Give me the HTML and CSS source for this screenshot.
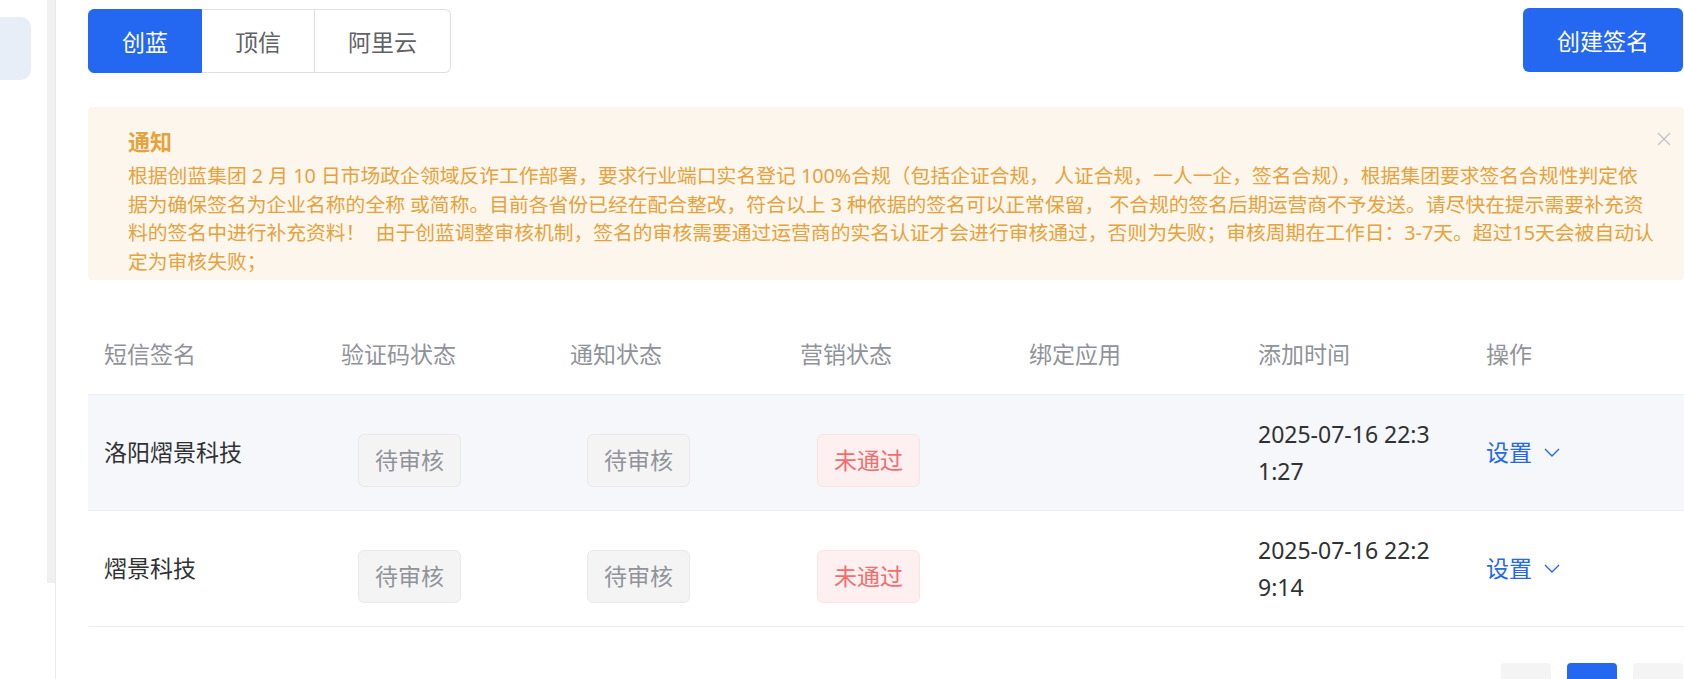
FILE: index.html
```html
<!DOCTYPE html>
<html lang="zh-CN">
<head>
    <meta charset="UTF-8">
    <meta name="viewport" content="width=device-width, initial-scale=1.0">
    <title>短信签名</title>
    <link rel="stylesheet" href="styles.css">
</head>
<body>
    <aside class="sidebar">
        <nav class="menu">
            <div class="menu-item active"></div>
        </nav>
        <div class="scroll-track"></div>
    </aside>
    <main class="main">
        <div class="topbar">
            <div class="tabs">
                <button class="tab active">创蓝</button>
                <button class="tab">顶信</button>
                <button class="tab">阿里云</button>
            </div>
            <button class="btn-primary">创建签名</button>
        </div>

        <div class="notice">
            <div class="notice-title">通知</div>
            <p class="notice-desc">根据创蓝集团 2 月 10 日市场政企领域反诈工作部署，要求行业端口实名登记 100%合规（包括企证合规， 人证合规，一人一企，签名合规），根据集团要求签名合规性判定依据为确保签名为企业名称的全称 或简称。目前各省份已经在配合整改，符合以上 3 种依据的签名可以正常保留， 不合规的签名后期运营商不予发送。请尽快在提示需要补充资料的签名中进行补充资料！&nbsp; 由于创蓝调整审核机制，签名的审核需要通过运营商的实名认证才会进行审核通过，否则为失败；审核周期在工作日：3-7天。超过15天会被自动认定为审核失败；</p>
            <span class="notice-close">
                <svg width="14" height="14" viewBox="0 0 14 14"><path d="M1 1 L13 13 M13 1 L1 13" stroke="#c0c4cc" stroke-width="1.4" fill="none"/></svg>
            </span>
        </div>

        <div class="table">
            <div class="row head">
                <div class="cell">短信签名</div>
                <div class="cell">验证码状态</div>
                <div class="cell">通知状态</div>
                <div class="cell">营销状态</div>
                <div class="cell">绑定应用</div>
                <div class="cell">添加时间</div>
                <div class="cell">操作</div>
            </div>
            <div class="row hover">
                <div class="cell">洛阳熠景科技</div>
                <div class="cell"><span class="tag">待审核</span></div>
                <div class="cell"><span class="tag">待审核</span></div>
                <div class="cell"><span class="tag danger">未通过</span></div>
                <div class="cell"></div>
                <div class="cell"><span class="time">2025-07-16 22:31:27</span></div>
                <div class="cell">
                    <a class="op">设置
                        <svg width="16" height="9" viewBox="0 0 16 9"><path d="M1 1 L8 8 L15 1" stroke="#2468f2" stroke-width="1.4" fill="none"/></svg>
                    </a>
                </div>
            </div>
            <div class="row">
                <div class="cell">熠景科技</div>
                <div class="cell"><span class="tag">待审核</span></div>
                <div class="cell"><span class="tag">待审核</span></div>
                <div class="cell"><span class="tag danger">未通过</span></div>
                <div class="cell"></div>
                <div class="cell"><span class="time">2025-07-16 22:29:14</span></div>
                <div class="cell">
                    <a class="op">设置
                        <svg width="16" height="9" viewBox="0 0 16 9"><path d="M1 1 L8 8 L15 1" stroke="#2468f2" stroke-width="1.4" fill="none"/></svg>
                    </a>
                </div>
            </div>
        </div>

        <div class="pager">
            <button class="page-btn">
                <svg width="12" height="14" viewBox="0 0 12 14"><path d="M9 1 L3 7 L9 13" stroke="#c0c4cc" stroke-width="1.6" fill="none"/></svg>
            </button>
            <button class="page-btn active">1</button>
            <button class="page-btn">
                <svg width="12" height="14" viewBox="0 0 12 14"><path d="M3 1 L9 7 L3 13" stroke="#c0c4cc" stroke-width="1.6" fill="none"/></svg>
            </button>
        </div>
    </main>
</body>
</html>
```

FILE: styles.css
```css
html, body {
    margin: 0;
    height: 100%;
    overflow: hidden;
}
body {
    display: flex;
    background: #fff;
    font-family: "Noto Sans", "Noto Sans CJK SC", sans-serif;
    color: #303133;
}
.sidebar {
    display: flex;
    width: 56px;
    flex-shrink: 0;
    box-sizing: border-box;
    border-right: 1px solid #e8e8e8;
}
.menu {
    width: 47px;
}
.menu-item {
    width: 31px;
    height: 63px;
    margin-top: 17px;
    background: #e8eef7;
    border-radius: 0 10px 10px 0;
}
.scroll-track {
    width: 8px;
    height: 583px;
    background: #f0f0f0;
}
.main {
    flex: 1;
    min-width: 0;
    padding: 8px 0 0 32px;
}
.topbar {
    display: flex;
    justify-content: space-between;
    align-items: flex-start;
    margin-right: 1px;
}
.tabs {
    display: flex;
    margin-top: 1px;
}
.tab {
    height: 64px;
    padding: 0 33px;
    font-family: inherit;
    font-size: 23px;
    color: #606266;
    background: #fff;
    border: 1px solid #dcdfe6;
    border-left-width: 0;
    cursor: pointer;
}
.tab:first-child {
    border-left-width: 1px;
    border-radius: 6px 0 0 6px;
}
.tab:last-child {
    border-radius: 0 6px 6px 0;
}
.tab.active {
    background: #2468f2;
    border-color: #2468f2;
    color: #fff;
}
.btn-primary {
    height: 64px;
    padding: 0 34px;
    font-family: inherit;
    font-size: 23px;
    color: #fff;
    background: #2468f2;
    border: none;
    border-radius: 6px;
    cursor: pointer;
}
.notice {
    position: relative;
    margin-top: 34px;
    padding: 20px 29px 4px 40px;
    background: #fdf6ec;
    border-radius: 4px;
    color: #e6a23c;
}
.notice-title {
    font-size: 22px;
    font-weight: bold;
    line-height: 28px;
}
.notice-desc {
    margin: 7px 0 0;
    font-size: 19.8px;
    line-height: 28.5px;
}
.notice-close {
    position: absolute;
    top: 22px;
    right: 13px;
    cursor: pointer;
}
.table {
    margin-top: 35px;
}
.row {
    display: grid;
    grid-template-columns: 237px 229px 230px 229px 229px 228px 1fr;
    align-items: center;
    box-sizing: border-box;
    height: 116px;
    border-bottom: 1px solid #ebeef5;
    font-size: 23px;
    line-height: 37px;
}
.row.head {
    height: 80px;
    color: #909399;
}
.row.hover {
    background: #f5f7fa;
}
.cell {
    padding: 0 16px;
}
.tag {
    display: block;
    width: fit-content;
    margin: 16px 0 0 17px;
    padding: 0 16px;
    line-height: 51px;
    color: #909399;
    background: #f4f4f5;
    border: 1px solid #e9e9eb;
    border-radius: 6px;
}
.tag.danger {
    color: #f56c6c;
    background: #fef0f0;
    border-color: #fde2e2;
}
.time {
    display: block;
    width: 180px;
    word-break: break-all;
}
.op {
    display: flex;
    align-items: center;
    gap: 12px;
    color: #2468f2;
    cursor: pointer;
}
.pager {
    display: flex;
    justify-content: flex-end;
    gap: 16px;
    margin: 36px 1px 0 0;
}
.page-btn {
    width: 50px;
    height: 51px;
    padding: 0;
    font-family: inherit;
    font-size: 21px;
    font-weight: bold;
    color: #606266;
    background: #f4f4f5;
    border: none;
    border-radius: 4px;
}
.page-btn.active {
    background: #2468f2;
    color: #fff;
}
```
